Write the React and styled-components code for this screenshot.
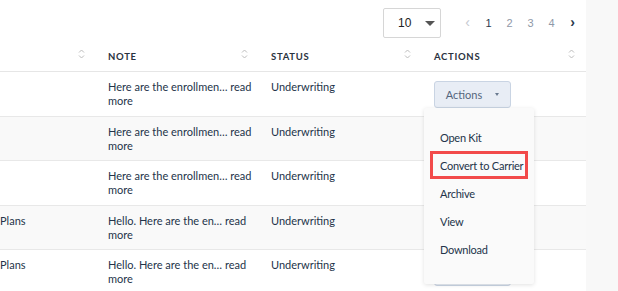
import React from "react";
import styled, { createGlobalStyle } from "styled-components";

const Global = createGlobalStyle`
  html, body { margin: 0; padding: 0; background: #fff; }
  body { font-family: Lato, "Open Sans", sans-serif; }
  * { box-sizing: border-box; }
`;

const Page = styled.div`
  display: flex;
  width: 618px;
  height: 291px;
  overflow: hidden;
`;

const Main = styled.div`
  width: 586px;
  display: flex;
  flex-direction: column;
  position: relative;
`;

const Strip = styled.div`
  flex: 1;
  background: #f8f8f8;
`;

const TopBar = styled.div`
  height: 40px;
  display: flex;
  align-items: flex-start;
  justify-content: flex-end;
  padding-top: 8px;
`;

const Select = styled.div`
  width: 58px;
  height: 30px;
  border: 1px solid #d6d6d6;
  border-radius: 2px;
  display: flex;
  align-items: center;
  justify-content: space-between;
  padding: 0 5px 0 14px;
  font-family: "Liberation Sans", Arial, sans-serif;
  font-size: 12px;
  color: #222;
`;

const Caret = styled.span`
  width: 0;
  height: 0;
  border-left: 5px solid transparent;
  border-right: 5px solid transparent;
  border-top: 5px solid #555;
`;

const Pager = styled.div`
  display: flex;
  align-items: center;
  height: 30px;
  margin-left: 16px;
  margin-right: 3px;
`;

const PageItem = styled.span`
  width: 21px;
  text-align: center;
  font-family: "Liberation Sans", Arial, sans-serif;
  font-size: ${(p) => (p.$arrow ? "14px" : "11px")};
  color: ${(p) => (p.$active ? "#2b3a4e" : p.$muted ? "#c5c9d0" : "#8f98a8")};
  font-weight: ${(p) => (p.$bold ? 700 : 400)};
  margin-top: ${(p) => (p.$arrow ? "-2px" : "0")};
`;

const Grid = styled.div`
  display: grid;
  grid-template-columns: 96px 163px 163px 164px;
`;

const HeadCell = styled.div`
  height: 34px;
  border-bottom: 1px solid #e6e6e6;
  display: flex;
  align-items: center;
  justify-content: space-between;
  padding: 4px 11px 0 12px;
  font-size: 9.5px;
  font-weight: 700;
  letter-spacing: 0.7px;
  color: #2a3240;
`;

const SortIcon = () => (
  <svg width="7" height="10" viewBox="0 0 7 10" style={{ marginTop: -5 }}>
    <path d="M1 3.5 L3.5 1 L6 3.5 M1 6.5 L3.5 9 L6 6.5" fill="none" stroke="#bdbdbd" strokeWidth="1" />
  </svg>
);

const Cell = styled.div`
  height: 44.5px;
  border-bottom: 1px solid #e8e8e8;
  background: ${(p) => (p.$alt ? "#f9f9f9" : "#fff")};
  padding: ${(p) => (p.$flush ? "8px 0 0 0" : "8px 12px 0 12px")};
  font-size: 11px;
  line-height: 14px;
  color: #24344a;
  overflow: hidden;
  white-space: nowrap;
`;

const ActionsButton = styled.div`
  width: 77px;
  height: 27px;
  margin-top: 1px;
  border: 1px solid #c9d4e3;
  border-radius: 3px;
  background: #e8edf5;
  display: flex;
  align-items: center;
  justify-content: center;
  gap: 13px;
  font-size: 11px;
  color: #54657c;
`;

const SmallCaret = styled.span`
  width: 0;
  height: 0;
  border-left: 2.5px solid transparent;
  border-right: 2.5px solid transparent;
  border-top: 3px solid #6a7a90;
`;

const Menu = styled.div`
  position: absolute;
  left: 424px;
  top: 108px;
  width: 110px;
  height: 176px;
  background: #fafafa;
  box-shadow: 0 1px 4px rgba(0, 0, 0, 0.12);
  border-radius: 2px;
  padding: 15px 6px 0 6px;
  display: flex;
  flex-direction: column;
`;

const MenuItem = styled.div`
  height: 28px;
  display: flex;
  align-items: center;
  white-space: nowrap;
  padding-left: ${(p) => (p.$hl ? "7px" : "10px")};
  font-size: 11px;
  letter-spacing: -0.25px;
  color: #24344a;
  border: ${(p) => (p.$hl ? "3px solid #f24a4a" : "none")};
`;

const rows = [
  { first: "", note: "Here are the enrollmen… read", alt: false, btn: true },
  { first: "", note: "Here are the enrollmen… read", alt: true },
  { first: "", note: "Here are the enrollmen… read", alt: false },
  { first: "Plans", note: "Hello. Here are the en… read", alt: true },
  { first: "Plans", note: "Hello. Here are the en… read", alt: false, btn: true },
];

export default function App() {
  return (
    <>
      <Global />
      <Page>
        <Main>
          <TopBar>
            <Select>
              <span>10</span>
              <Caret />
            </Select>
            <Pager>
              <PageItem $muted $arrow>‹</PageItem>
              <PageItem $active>1</PageItem>
              <PageItem>2</PageItem>
              <PageItem>3</PageItem>
              <PageItem>4</PageItem>
              <PageItem $active $bold $arrow>›</PageItem>
            </Pager>
          </TopBar>
          <Grid>
            <HeadCell>
              <span />
              <SortIcon />
            </HeadCell>
            <HeadCell>
              <span>NOTE</span>
              <SortIcon />
            </HeadCell>
            <HeadCell>
              <span>STATUS</span>
              <SortIcon />
            </HeadCell>
            <HeadCell>
              <span>ACTIONS</span>
              <SortIcon />
            </HeadCell>
            {rows.map((r, i) => (
              <React.Fragment key={i}>
                <Cell $alt={r.alt} $flush>{r.first}</Cell>
                <Cell $alt={r.alt}>
                  {r.note}
                  <br />
                  more
                </Cell>
                <Cell $alt={r.alt}>Underwriting</Cell>
                <Cell $alt={r.alt}>
                  {r.btn && (
                    <ActionsButton>
                      <span>Actions</span>
                      <SmallCaret />
                    </ActionsButton>
                  )}
                </Cell>
              </React.Fragment>
            ))}
          </Grid>
          <Menu>
            <MenuItem>Open Kit</MenuItem>
            <MenuItem $hl>Convert to Carrier</MenuItem>
            <MenuItem>Archive</MenuItem>
            <MenuItem>View</MenuItem>
            <MenuItem>Download</MenuItem>
          </Menu>
        </Main>
        <Strip />
      </Page>
    </>
  );
}
